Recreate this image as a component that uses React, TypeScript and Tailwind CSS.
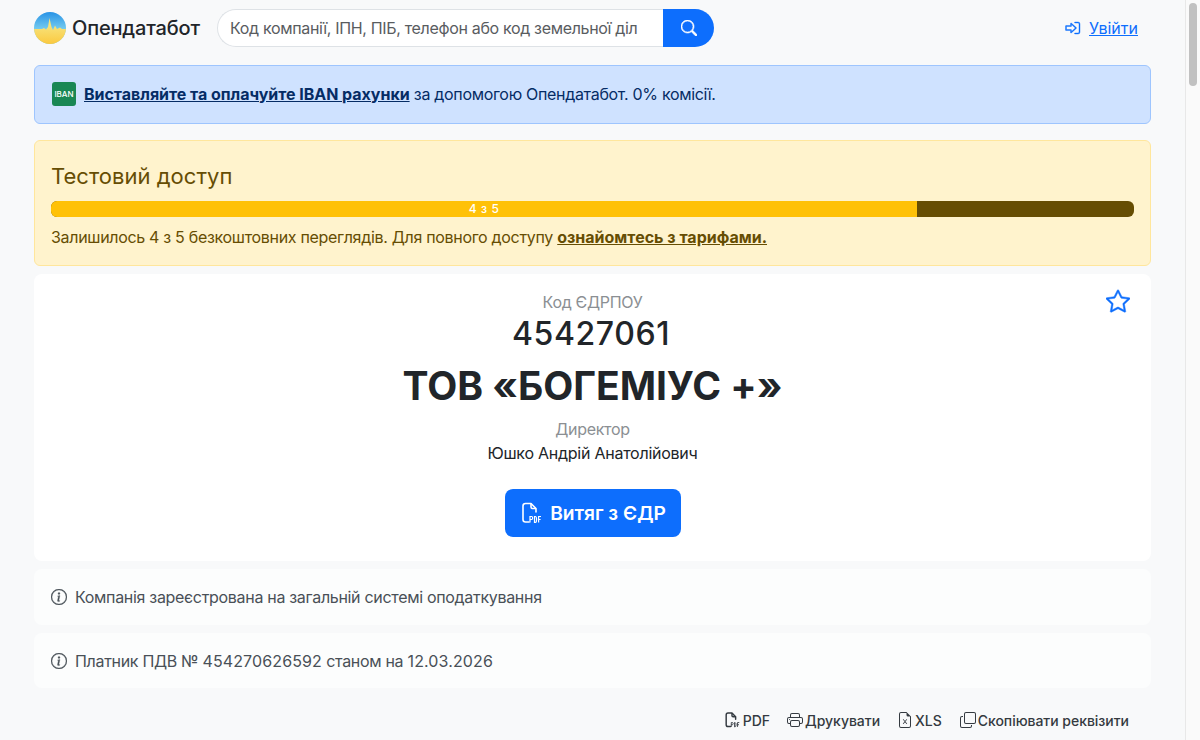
import React from "react";

function Logo() {
  return (
    <svg width="32" height="32" viewBox="0 0 32 32" className="shrink-0">
      <defs>
        <linearGradient id="sky" x1="0" y1="0" x2="0" y2="1">
          <stop offset="0" stopColor="#2893e6" />
          <stop offset="0.6" stopColor="#7fd2f0" />
        </linearGradient>
        <linearGradient id="sun" x1="0" y1="0" x2="0" y2="1">
          <stop offset="0.3" stopColor="#f7e27a" />
          <stop offset="1" stopColor="#fbc93f" />
        </linearGradient>
        <clipPath id="c"><circle cx="16" cy="16" r="16" /></clipPath>
      </defs>
      <g clipPath="url(#c)">
        <rect width="32" height="32" fill="url(#sky)" />
        <path d="M0 17H8L10 16L12 17.5L14 15L15.5 6L17.5 15L19 18L21 13.5L23 17L26 15.5L28 17H32V32H0Z" fill="url(#sun)" />
      </g>
    </svg>
  );
}

function PdfIcon({ size, light }: { size: number; light?: boolean }) {
  return (
    <svg width={size} height={size} viewBox="0 0 22 22" fill="none" stroke="currentColor" strokeWidth={light ? 1.6 : 2}>
      <path d="M9 20H5.5C4 20 3 19 3 17.5V4C3 2.5 4 1.5 5.5 1.5H11L16 6.5V10" strokeLinecap="round" strokeLinejoin="round" />
      <path d="M11 1.5V5C11 6 11.6 6.5 12.5 6.5H16" strokeLinejoin="round" />
      <g stroke="currentColor" strokeWidth="1.2">
        <path d="M10 20.5V14.5H11.6C13 14.5 13 17.5 11.6 17.5H10" />
        <path d="M14.5 14.5V20.5H15.3C17 20.5 17 14.5 15.3 14.5H14.5Z" />
        <path d="M21 14.5H18.6V20.5M18.6 17.5H20.6" />
      </g>
    </svg>
  );
}

function Info() {
  return (
    <svg width="16" height="16" viewBox="0 0 16 16" fill="currentColor" stroke="currentColor" strokeWidth="0.3" className="shrink-0">
      <path d="M8 15A7 7 0 1 1 8 1a7 7 0 0 1 0 14zm0 1A8 8 0 1 0 8 0a8 8 0 0 0 0 16z" />
      <path d="m8.93 6.588-2.29.287-.082.38.45.083c.294.07.352.176.288.469l-.738 3.468c-.194.897.105 1.319.808 1.319.545 0 1.178-.252 1.465-.598l.088-.416c-.2.176-.492.246-.686.246-.275 0-.375-.193-.304-.533L8.93 6.588zM9 4.5a1 1 0 1 1-2 0 1 1 0 0 1 2 0z" />
    </svg>
  );
}

export default function App() {
  return (
    <div className="flex h-[740px] w-[1200px] overflow-hidden bg-[#f8f9fa] font-['Inter','Liberation_Sans',sans-serif] text-[16px] tracking-[-0.31px] text-[#212529]">
      <div className="flex w-[1185px] flex-col px-[34px]">
        <header className="flex h-[56px] shrink-0 items-center">
          <div className="flex w-[183px] shrink-0 items-center gap-[6px]">
            <Logo />
            <span className="text-[20px] font-medium leading-none tracking-[-0.17px] text-[#212529]">Опендатабот</span>
          </div>
          <div className="flex h-[38px] w-[497px] shrink-0">
            <div className="flex w-[446px] items-center overflow-hidden whitespace-nowrap rounded-l-[19px] border border-r-0 border-[#dee2e6] bg-white pl-[12px] tracking-[-0.33px] text-[#595c5f]">
              Код компанії, ІПН, ПІБ, телефон або код земельної діл
            </div>
            <button className="flex w-[51px] items-center justify-center rounded-r-[19px] bg-[#0d6efd] text-white">
              <svg width="16" height="16" viewBox="0 0 16 16" fill="currentColor" stroke="currentColor" strokeWidth="0.6">
                <path d="M11.742 10.344a6.5 6.5 0 1 0-1.397 1.398h-.001c.03.04.062.078.098.115l3.85 3.85a1 1 0 0 0 1.415-1.414l-3.85-3.85a1.007 1.007 0 0 0-.115-.1zM12 6.5a5.5 5.5 0 1 1-11 0 5.5 5.5 0 0 1 11 0z" />
              </svg>
            </button>
          </div>
          <a className="ml-auto mr-[13px] flex items-center gap-[8px] tracking-normal text-[#0d6efd]">
            <svg width="16" height="16" viewBox="0 0 16 16" fill="currentColor" stroke="currentColor" strokeWidth="0.4">
              <path d="M6.02 3.08A.5.5 0 0 0 5.5 3.5V5.5H1a.5.5 0 0 0-.5.5v4a.5.5 0 0 0 .5.5h4.5v2a.5.5 0 0 0 .83.38l5-4.5a.5.5 0 0 0 0-.76l-5-4.5a.5.5 0 0 0-.31-.04zM6.5 4.62 10.25 8 6.5 11.38V10a.5.5 0 0 0-.5-.5H1.5v-3H6a.5.5 0 0 0 .5-.5z" />
              <path d="M10 2a.5.5 0 0 0 0 1h3a1 1 0 0 1 1 1v8a1 1 0 0 1-1 1h-3a.5.5 0 0 0 0 1h3a2 2 0 0 0 2-2V4a2 2 0 0 0-2-2z" />
            </svg>
            <span className="underline">Увійти</span>
          </a>
        </header>

        <div className="mt-[9px] flex h-[59px] shrink-0 items-center gap-[8px] rounded-[6px] border border-[#9ec5fe] bg-[#cfe2ff] pb-[2px] pl-[17px] pr-[16px] text-[#052c65]">
          <span className="flex h-[24px] w-[24px] items-center justify-center rounded-[3px] bg-[#198754] text-[8px] font-medium tracking-normal text-white">IBAN</span>
          <span><a className="font-bold tracking-[-0.03px] underline">Виставляйте та оплачуйте IBAN рахунки</a> за допомогою Опендатабот. 0% комісії.</span>
        </div>

        <div className="mt-[16px] flex h-[126px] shrink-0 flex-col rounded-[6px] border border-[#ffe69c] bg-[#fff3cd] px-[16px] pt-[19px] text-[#664d03]">
          <div className="text-[22px] leading-[32px] tracking-[0.02px]">Тестовий доступ</div>
          <div className="mt-[9px] flex h-[16px] overflow-hidden rounded-[6px] bg-[#664d03]">
            <div className="flex w-[80%] items-center justify-center bg-[#ffc107] text-[12px] font-medium tracking-[0.6px] text-white">4 з 5</div>
          </div>
          <div className="mt-[8px] leading-[24px]">
            Залишилось 4 з 5 безкоштовних переглядів. Для повного доступу <a className="font-bold tracking-normal underline">ознайомтесь з тарифами.</a>
          </div>
        </div>

        <section className="relative mt-[8px] flex h-[287px] shrink-0 flex-col items-center rounded-[8px] bg-white pt-[16px]">
          <svg className="absolute right-[21px] top-[15px] text-[#0d6efd]" width="24" height="24" viewBox="0 0 16 16" fill="currentColor" stroke="currentColor" strokeWidth="0.3">
            <path d="M2.866 14.85c-.078.444.36.791.746.593l4.39-2.256 4.389 2.256c.386.198.824-.149.746-.592l-.83-4.73 3.522-3.356c.33-.314.16-.888-.282-.95l-4.898-.696L8.465.792a.513.513 0 0 0-.927 0L5.354 5.12l-4.898.696c-.441.062-.612.636-.283.95l3.523 3.356-.83 4.73zm4.905-2.767-3.686 1.894.694-3.957a.565.565 0 0 0-.163-.505L1.71 6.745l4.052-.576a.525.525 0 0 0 .393-.288L8 2.223l1.847 3.658a.525.525 0 0 0 .393.288l4.052.575-2.906 2.77a.565.565 0 0 0-.163.506l.694 3.957-3.686-1.894a.503.503 0 0 0-.461 0z" />
          </svg>
          <div className="leading-[24px] text-[#8b8f93]">Код ЄДРПОУ</div>
          <div className="mt-[1px] pr-[3px] text-[32px] font-medium leading-[38px] tracking-[0.6px]">45427061</div>
          <h1 className="mt-[9px] text-[39px] font-bold leading-[48px] tracking-[-0.03px]">ТОВ «БОГЕМІУС +»</h1>
          <div className="mt-[7px] leading-[24px] text-[#8b8f93]">Директор</div>
          <div className="leading-[24px] tracking-[-0.25px]">Юшко Андрій Анатолійович</div>
          <button className="ml-[1px] mt-[24px] flex h-[48px] w-[176px] items-center justify-center gap-[8px] rounded-[8px] bg-[#0d6efd] text-[19.2px] font-semibold tracking-normal text-white">
            <PdfIcon size={22} light />
            Витяг з ЄДР
          </button>
        </section>

        <div className="mt-[8px] flex h-[56px] shrink-0 items-center gap-[8px] rounded-[8px] bg-[#fcfdfd] pl-[17px] pr-[16px] text-[#495057]">
          <Info />
          Компанія зареєстрована на загальній системі оподаткування
        </div>
        <div className="mt-[8px] flex h-[55px] shrink-0 items-center gap-[8px] rounded-[8px] bg-[#fcfdfd] pl-[17px] pr-[16px] text-[#495057]">
          <Info />
          <span>Платник ПДВ № <span className="tracking-[0.12px]">454270626592</span> станом на <span className="tracking-[0.12px]">12.03.2026</span></span>
        </div>

        <div className="mt-[22px] flex h-[20px] shrink-0 items-center justify-end gap-[17px] pr-[22px] text-[14px] font-medium tracking-[-0.03px] text-[#343a40]">
          <span className="flex items-center gap-[3px]"><PdfIcon size={16} />PDF</span>
          <span className="flex items-center gap-[2px]">
            <svg width="16" height="16" viewBox="0 0 16 16" fill="currentColor">
              <path d="M2.5 8a.5.5 0 1 0 0-1 .5.5 0 0 0 0 1z" />
              <path d="M5 1a2 2 0 0 0-2 2v2H2a2 2 0 0 0-2 2v3a2 2 0 0 0 2 2h1v1a2 2 0 0 0 2 2h6a2 2 0 0 0 2-2v-1h1a2 2 0 0 0 2-2V7a2 2 0 0 0-2-2h-1V3a2 2 0 0 0-2-2H5zM4 3a1 1 0 0 1 1-1h6a1 1 0 0 1 1 1v2H4V3zm1 5a2 2 0 0 0-2 2v1H2a1 1 0 0 1-1-1V7a1 1 0 0 1 1-1h12a1 1 0 0 1 1 1v3a1 1 0 0 1-1 1h-1v-1a2 2 0 0 0-2-2H5zm7 2v3a1 1 0 0 1-1 1H5a1 1 0 0 1-1-1v-3a1 1 0 0 1 1-1h6a1 1 0 0 1 1 1z" />
            </svg>
            Друкувати
          </span>
          <span className="flex items-center gap-[2px]">
            <svg width="16" height="16" viewBox="0 0 16 16" fill="currentColor">
              <path d="M5.884 6.68a.5.5 0 1 0-.768.64L7.349 10l-2.233 2.68a.5.5 0 0 0 .768.64L8 10.781l2.116 2.54a.5.5 0 0 0 .768-.641L8.651 10l2.233-2.68a.5.5 0 0 0-.768-.64L8 9.219l-2.116-2.54z" transform="translate(2.4 2.6) scale(0.7)" />
              <path d="M14 14V4.5L9.5 0H4a2 2 0 0 0-2 2v12a2 2 0 0 0 2 2h8a2 2 0 0 0 2-2zM9.5 3A1.5 1.5 0 0 0 11 4.5h2V14a1 1 0 0 1-1 1H4a1 1 0 0 1-1-1V2a1 1 0 0 1 1-1h5.5v2z" />
            </svg>
            XLS
          </span>
          <span className="ml-[1px] flex items-center gap-[2px]">
            <svg width="16" height="16" viewBox="0 0 16 16" fill="currentColor">
              <path fillRule="evenodd" d="M4 2a2 2 0 0 1 2-2h8a2 2 0 0 1 2 2v8a2 2 0 0 1-2 2H6a2 2 0 0 1-2-2V2zm2-1a1 1 0 0 0-1 1v8a1 1 0 0 0 1 1h8a1 1 0 0 0 1-1V2a1 1 0 0 0-1-1H6zM2 5a1 1 0 0 0-1 1v8a1 1 0 0 0 1 1h8a1 1 0 0 0 1-1v-1h1v1a2 2 0 0 1-2 2H2a2 2 0 0 1-2-2V6a2 2 0 0 1 2-2h1v1H2z" />
            </svg>
            Скопіювати реквізити
          </span>
        </div>
      </div>

      <div className="w-[15px] shrink-0 border-l border-[#e8e8e8] bg-[#fafafa] px-[3px] pt-[3px]">
        <div className="h-[83px] w-[8px] rounded-full bg-[#c1c1c1]" />
      </div>
    </div>
  );
}
